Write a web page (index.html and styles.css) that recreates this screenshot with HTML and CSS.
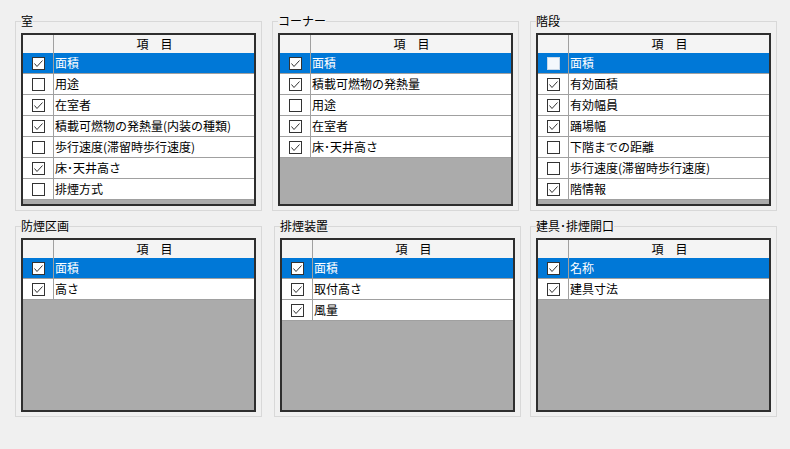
FILE: index.html
```html
<!DOCTYPE html>
<html lang="ja">
<head>
<meta charset="utf-8">
<title>項目設定</title>
<link rel="stylesheet" href="styles.css">
</head>
<body>
<svg class="defs" width="0" height="0">
  <symbol id="chk" viewBox="0 0 13 13"><polyline points="2.5,6.5 5,9.5 10.5,3.5" fill="none" stroke="#333" stroke-width="1"/></symbol>
</svg>
<div class="row row-top">
  <fieldset class="grp g1">
    <legend>室</legend>
    <div class="grid">
      <div class="hdr"><div class="cc"></div><div class="tc">項&#x3000;目</div></div>
      <div class="r sel"><div class="cc"><span class="cb"><svg><use href="#chk"/></svg></span></div><div class="tc">面積</div></div>
      <div class="r"><div class="cc"><span class="cb"></span></div><div class="tc">用途</div></div>
      <div class="r"><div class="cc"><span class="cb"><svg><use href="#chk"/></svg></span></div><div class="tc">在室者</div></div>
      <div class="r"><div class="cc"><span class="cb"><svg><use href="#chk"/></svg></span></div><div class="tc">積載可燃物の発熱量(内装の種類)</div></div>
      <div class="r"><div class="cc"><span class="cb"></span></div><div class="tc">歩行速度(滞留時歩行速度)</div></div>
      <div class="r"><div class="cc"><span class="cb"><svg><use href="#chk"/></svg></span></div><div class="tc">床･天井高さ</div></div>
      <div class="r"><div class="cc"><span class="cb"></span></div><div class="tc">排煙方式</div></div>
      <div class="fill"></div>
    </div>
  </fieldset>
  <fieldset class="grp g2">
    <legend>コーナー</legend>
    <div class="grid">
      <div class="hdr"><div class="cc"></div><div class="tc">項&#x3000;目</div></div>
      <div class="r sel"><div class="cc"><span class="cb"><svg><use href="#chk"/></svg></span></div><div class="tc">面積</div></div>
      <div class="r"><div class="cc"><span class="cb"><svg><use href="#chk"/></svg></span></div><div class="tc">積載可燃物の発熱量</div></div>
      <div class="r"><div class="cc"><span class="cb"></span></div><div class="tc">用途</div></div>
      <div class="r"><div class="cc"><span class="cb"><svg><use href="#chk"/></svg></span></div><div class="tc">在室者</div></div>
      <div class="r"><div class="cc"><span class="cb"><svg><use href="#chk"/></svg></span></div><div class="tc">床･天井高さ</div></div>
      <div class="fill"></div>
    </div>
  </fieldset>
  <fieldset class="grp g3">
    <legend>階段</legend>
    <div class="grid">
      <div class="hdr"><div class="cc"></div><div class="tc">項&#x3000;目</div></div>
      <div class="r sel"><div class="cc"><span class="cb light"></span></div><div class="tc">面積</div></div>
      <div class="r"><div class="cc"><span class="cb"><svg><use href="#chk"/></svg></span></div><div class="tc">有効面積</div></div>
      <div class="r"><div class="cc"><span class="cb"><svg><use href="#chk"/></svg></span></div><div class="tc">有効幅員</div></div>
      <div class="r"><div class="cc"><span class="cb"><svg><use href="#chk"/></svg></span></div><div class="tc">踊場幅</div></div>
      <div class="r"><div class="cc"><span class="cb"></span></div><div class="tc">下階までの距離</div></div>
      <div class="r"><div class="cc"><span class="cb"></span></div><div class="tc">歩行速度(滞留時歩行速度)</div></div>
      <div class="r"><div class="cc"><span class="cb"><svg><use href="#chk"/></svg></span></div><div class="tc">階情報</div></div>
      <div class="fill"></div>
    </div>
  </fieldset>
</div>
<div class="row row-bottom">
  <fieldset class="grp g4">
    <legend>防煙区画</legend>
    <div class="grid">
      <div class="hdr"><div class="cc"></div><div class="tc">項&#x3000;目</div></div>
      <div class="r sel"><div class="cc"><span class="cb"><svg><use href="#chk"/></svg></span></div><div class="tc">面積</div></div>
      <div class="r"><div class="cc"><span class="cb"><svg><use href="#chk"/></svg></span></div><div class="tc">高さ</div></div>
      <div class="fill"></div>
    </div>
  </fieldset>
  <fieldset class="grp g5">
    <legend>排煙装置</legend>
    <div class="grid">
      <div class="hdr"><div class="cc"></div><div class="tc">項&#x3000;目</div></div>
      <div class="r sel"><div class="cc"><span class="cb"><svg><use href="#chk"/></svg></span></div><div class="tc">面積</div></div>
      <div class="r"><div class="cc"><span class="cb"><svg><use href="#chk"/></svg></span></div><div class="tc">取付高さ</div></div>
      <div class="r"><div class="cc"><span class="cb"><svg><use href="#chk"/></svg></span></div><div class="tc">風量</div></div>
      <div class="fill"></div>
    </div>
  </fieldset>
  <fieldset class="grp g6">
    <legend>建具･排煙開口</legend>
    <div class="grid">
      <div class="hdr"><div class="cc"></div><div class="tc">項&#x3000;目</div></div>
      <div class="r sel"><div class="cc"><span class="cb"><svg><use href="#chk"/></svg></span></div><div class="tc">名称</div></div>
      <div class="r"><div class="cc"><span class="cb"><svg><use href="#chk"/></svg></span></div><div class="tc">建具寸法</div></div>
      <div class="fill"></div>
    </div>
  </fieldset>
</div>
</body>
</html>
```
FILE: styles.css
```css
html, body {
  margin: 0;
  padding: 0;
  background: #f0f0f0;
}
body {
  font-family: "Noto Sans CJK JP", "Noto Sans", sans-serif;
  font-size: 12px;
  color: #000;
  padding-top: 13px;
  width: 790px;
  height: 449px;
  box-sizing: border-box;
  overflow: hidden;
}
.defs { position: absolute; width: 0; height: 0; }
.row {
  display: flex;
  align-items: flex-start;
}
.row-bottom { margin-top: 7px; }
.grp {
  margin: 0;
  width: 247px;
  box-sizing: border-box;
  border: 1px solid #d8d8d8;
  padding: 4px 5px 4px 5px;
  min-width: 0;
}
.grp legend {
  padding: 0;
  margin-left: 0;
  line-height: 16px;
  height: 16px;
  font-size: 12px;
}
.g1 { margin-left: 15px; }
.g2 { margin-left: 10px; }
.g3 { margin-left: 11px; }
.g4 { margin-left: 15px; }
.g5 { margin-left: 12px; }
.g6 { margin-left: 9px; }

.grid {
  width: 235px;
  height: 173px;
  box-sizing: border-box;
  border: 2px solid #2e2e2e;
  display: flex;
  flex-direction: column;
  background: #fff;
}
.row-bottom .grid { height: 174px; }
.hdr, .r {
  display: flex;
  flex: none;
}
.hdr {
  height: 18px;
  background: #f4f4f4;
}
.r {
  height: 20px;
  border-bottom: 1px solid #a0a0a0;
  background: #fff;
}
.cc {
  width: 30px;
  flex: none;
  border-right: 1px solid #a0a0a0;
  display: flex;
  align-items: center;
  justify-content: center;
}
.tc {
  flex: 1;
  padding-left: 1px;
  line-height: 20px;
  white-space: nowrap;
  overflow: hidden;
}
.hdr .tc {
  text-align: center;
  line-height: 18px;
}
.r.sel {
  background: #0078d7;
  color: #fff;
}
.cb {
  width: 13px;
  height: 13px;
  box-sizing: border-box;
  border: 1px solid #333;
  background: #fff;
  display: block;
  position: relative;
}
.cb svg {
  position: absolute;
  left: -1px;
  top: -1px;
  width: 13px;
  height: 13px;
}
.cb.light {
  border-color: #c8d8e8;
  background: #f4f8fc;
}
.fill {
  flex: 1;
  background: #ababab;
}
```
